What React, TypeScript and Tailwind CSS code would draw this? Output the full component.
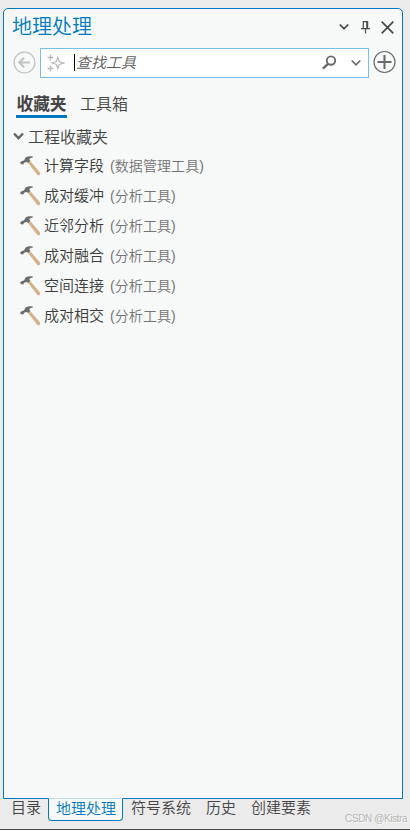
type Tool = {
  name: string;
  toolbox: string;
};

const tools: Tool[] = [
  { name: "计算字段", toolbox: "(数据管理工具)" },
  { name: "成对缓冲", toolbox: "(分析工具)" },
  { name: "近邻分析", toolbox: "(分析工具)" },
  { name: "成对融合", toolbox: "(分析工具)" },
  { name: "空间连接", toolbox: "(分析工具)" },
  { name: "成对相交", toolbox: "(分析工具)" },
];

const HammerIcon = () => (
  <svg width="22" height="20" viewBox="0 0 22 20" className="shrink-0">
    <path d="M8.2 7.2 L10.6 5.6 L20.3 16.8 L19.6 19.2 L17.6 19.2 Z" fill="#d5b28c" />
    <path
      d="M0.2 6.2 L2.6 4.8 L4 4.6 L5.4 1.8 C7.5 0.2 10 0 12.8 0.4 L12.8 1.4 C10.6 1.5 9.6 2.4 9.3 3.3 L10.4 5 L8.4 6.9 L6.7 5.9 L4.6 6.6 L3 8.4 L0.6 8 Z"
      fill="#6c6d6d"
    />
  </svg>
);

const Header = () => (
  <div className="flex h-[36px] shrink-0 items-center pr-[8px] pl-[8px]">
    <h1 className="flex-1 text-[20px] leading-[24px] font-[350] text-[#0079c1]">地理处理</h1>
    <div className="flex items-center text-[#4a4a4a]">
      <svg width="10" height="8" viewBox="0 0 10 8" fill="none" stroke="currentColor" strokeWidth="1.7">
        <path d="M0.7 1.5 L5 5.7 L9.3 1.5" />
      </svg>
      <svg width="9" height="14" viewBox="0 0 9 14" fill="none" stroke="currentColor" className="ml-[12px]">
        <path d="M1.8 1.6 H7 M2.3 1 V8 M0 8.6 H9 M4.5 9 V13.5" strokeWidth="1.2" />
        <path d="M6.2 1 V8.5" strokeWidth="2" />
      </svg>
      <svg width="13" height="13" viewBox="0 0 13 13" fill="none" stroke="currentColor" strokeWidth="1.7" className="ml-[11px]">
        <path d="M0.7 0.7 L12.3 12.3 M12.3 0.7 L0.7 12.3" />
      </svg>
    </div>
  </div>
);

const SearchBar = () => (
  <div className="mt-px flex h-[32px] shrink-0 items-center pr-[6px] pl-[9px]">
    <svg width="24" height="24" viewBox="0 0 24 24" fill="none" stroke="#c3c4c4" className="mr-[3px] shrink-0">
      <circle cx="11.5" cy="12.5" r="10.4" strokeWidth="1.3" />
      <path d="M6 12.5 H17 M11 7.8 L6.3 12.5 L11 17.2" strokeWidth="2.2" />
    </svg>
    <div className="mt-px flex h-[30px] flex-1 items-center border border-[#7abde8] bg-white">
      <svg width="18" height="18" viewBox="0 0 18 18" fill="none" stroke="#b9b9b9" className="ml-[6px]">
        <path d="M10.8 3.4 L12.2 7.6 L16.5 9 L12.2 10.4 L10.8 14.6 L9.4 10.4 L5.2 9 L9.4 7.6 Z" strokeWidth="1.3" />
        <path d="M3.5 0.6 V6.4 M0.6 3.5 H6.4 M3.5 11.6 V17.4 M0.6 14.5 H6.4" strokeWidth="1.3" />
      </svg>
      <span className="ml-[9px] h-[17px] w-px bg-black" />
      <span className="ml-px flex-1 text-[15px] leading-[20px] text-[#5c5c5c] italic">查找工具</span>
      <svg width="15" height="15" viewBox="0 0 15 15" fill="none" stroke="#6a6a6a">
        <circle cx="9" cy="5.6" r="4.2" strokeWidth="1.9" />
        <path d="M6 8.8 L0.9 13.6" strokeWidth="2.5" />
      </svg>
      <svg width="10" height="8" viewBox="0 0 10 8" fill="none" stroke="#6a6a6a" strokeWidth="1.7" className="mr-[7px] ml-[14px]">
        <path d="M0.7 1.5 L5 5.8 L9.3 1.5" />
      </svg>
    </div>
    <svg width="24" height="24" viewBox="0 0 24 24" fill="none" stroke="#6a6a6a" className="ml-[3px] shrink-0">
      <circle cx="12.5" cy="12" r="10.5" strokeWidth="1.2" />
      <path d="M12.5 5 V19 M5.5 12 H19.5" strokeWidth="2.1" />
    </svg>
  </div>
);

const ToolRow = ({ name, toolbox }: Tool) => (
  <li className="flex h-[30px] items-center pl-[16px]">
    <HammerIcon />
    <span className="ml-[2px] text-[15px] leading-[20px] text-[#3c3c3c]">{name}</span>
    <span className="ml-[6px] text-[14px] leading-[20px] tracking-[0.08px] text-[#747474]">{toolbox}</span>
  </li>
);

const App = () => {
  return (
    <div className="flex h-[830px] w-[410px] flex-col overflow-hidden border-b border-[#4a4a4a] bg-[#ebebeb] pt-[8px] font-['Liberation_Sans','Noto_Sans_CJK_SC',sans-serif] font-[350]">
      <div className="ml-[3px] flex h-[791px] w-[400px] shrink-0 flex-col rounded-t-[5px] border border-[#0079c1] bg-[#f7f9f8]">
        <Header />
        <SearchBar />
        <div className="mt-[14px] flex h-[26px] shrink-0 items-start pl-[12px] text-[#444444]">
          <button className="h-[26px] w-[51px] border-b-[3px] border-[#0079c1] text-center text-[16.7px] leading-[25px] font-bold whitespace-nowrap">
            收藏夹
          </button>
          <button className="ml-[13px] text-[16px] leading-[25px]">工具箱</button>
        </div>
        <div className="mt-[9px] flex h-[22px] shrink-0 items-center pl-[9px] text-[#444444]">
          <svg width="11" height="9" viewBox="0 0 11 9" fill="none" stroke="#666666" strokeWidth="2.4" className="-mt-[3px]">
            <path d="M1 1.5 L5.5 6.2 L10 1.5" />
          </svg>
          <span className="ml-[4px] text-[16px] leading-[22px]">工程收藏夹</span>
        </div>
        <ul className="mt-[2px]">
          {tools.map((tool) => (
            <ToolRow key={tool.name} {...tool} />
          ))}
        </ul>
      </div>
      <div className="relative -mt-px flex h-[31px] shrink-0 items-start pl-[11px] text-[15px] leading-[20px] whitespace-nowrap text-[#444444]">
        <span>目录</span>
        <span className="ml-[7px] h-[23px] w-[75px] rounded-b-[4px] border border-t-[#c3dcea] border-[#0079c1] bg-[#f7f9f8] pl-px text-center leading-[19px] text-[#0079c1]">
          地理处理
        </span>
        <span className="ml-[8px]">符号系统</span>
        <span className="ml-[15px]">历史</span>
        <span className="ml-[15px]">创建要素</span>
        <span className="mt-[11px] ml-[34px] text-[10px] leading-[20px] tracking-[-0.4px] text-[#b5b5b5] [text-shadow:1px_1px_0_#fafafa]">
          CSDN @Kistra
        </span>
      </div>
    </div>
  );
};

export default App;
